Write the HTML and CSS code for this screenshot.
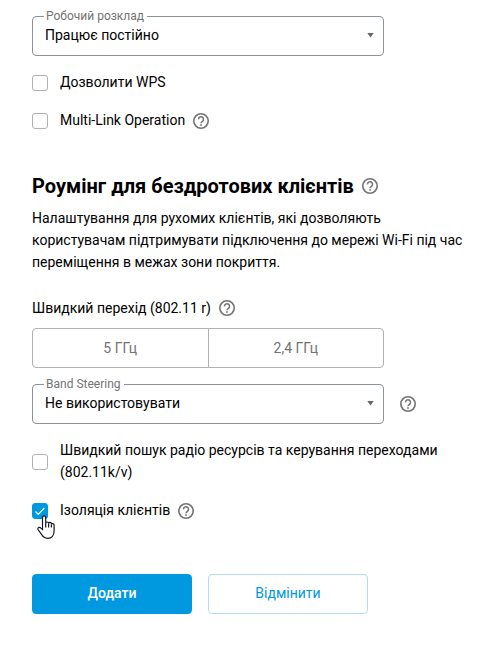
FILE: index.html
```html
<!DOCTYPE html>
<html lang="uk">
<head>
    <meta charset="UTF-8">
    <meta name="viewport" content="width=device-width, initial-scale=1.0">
    <title>Налаштування Wi-Fi</title>
    <link rel="stylesheet" href="styles.css">
</head>
<body>
    <svg class="sprite" aria-hidden="true">
        <symbol id="help" viewBox="0 0 16 16">
            <circle cx="8" cy="8" r="7.2" fill="none" stroke="currentColor" stroke-width="1.6"/>
            <path d="M5.5 6.4a2.5 2.5 0 1 1 4 1.9C8.6 9 8 9.3 8 10.3" fill="none" stroke="currentColor" stroke-width="1.5"/>
            <rect x="7.2" y="11.2" width="1.6" height="1.6" fill="currentColor"/>
        </symbol>
    </svg>

    <form class="settings">
        <div class="field">
            <label class="field-label" for="schedule">Робочий розклад</label>
            <select id="schedule" class="field-select">
                <option>Працює постійно</option>
            </select>
            <svg class="arrow" viewBox="0 0 7 5"><path d="M.3 0h6.4L3.5 4.6z"/></svg>
        </div>

        <div class="check-row">
            <input type="checkbox" id="wps" class="check">
            <label for="wps">Дозволити WPS</label>
        </div>
        <div class="check-row">
            <input type="checkbox" id="mlo" class="check">
            <label for="mlo">Multi-Link Operation</label>
            <svg class="help"><use href="#help"/></svg>
        </div>

        <div class="section-title">
            <h2>Роумінг для бездротових клієнтів</h2>
            <svg class="help"><use href="#help"/></svg>
        </div>
        <p class="section-text">Налаштування для рухомих клієнтів, які дозволяють користувачам підтримувати підключення до мережі Wi-Fi під час переміщення в межах зони покриття.</p>

        <div class="group-title">
            <span id="ft-label">Швидкий перехід (802.11 r)</span>
            <svg class="help"><use href="#help"/></svg>
        </div>
        <div class="segments" role="group" aria-labelledby="ft-label">
            <button type="button" class="segment">5 ГГц</button>
            <button type="button" class="segment">2,4 ГГц</button>
        </div>

        <div class="field-row">
            <div class="field">
                <label class="field-label" for="steering">Band Steering</label>
                <select id="steering" class="field-select">
                    <option>Не використовувати</option>
                </select>
                <svg class="arrow" viewBox="0 0 7 5"><path d="M.3 0h6.4L3.5 4.6z"/></svg>
            </div>
            <svg class="help"><use href="#help"/></svg>
        </div>

        <div class="check-row">
            <input type="checkbox" id="kv" class="check">
            <label for="kv">Швидкий пошук радіо ресурсів та керування переходами (802.11k/v)</label>
        </div>
        <div class="check-row">
            <input type="checkbox" id="isolation" class="check" checked>
            <svg class="tick" viewBox="0 0 16 16"><path d="M3.5 8.5l2.8 2.8 6-6.3"/></svg>
            <label for="isolation">Ізоляція клієнтів</label>
            <svg class="help"><use href="#help"/></svg>
            <svg class="pointer" viewBox="0 0 18 24">
                <path d="M5.5 14.5V2.6c0-1 .7-1.7 1.6-1.7s1.6.7 1.6 1.7v5.6c.2-.8.8-1.2 1.5-1.2.8 0 1.4.6 1.4 1.4.2-.6.8-1 1.4-1 .8 0 1.4.6 1.4 1.4v.5c.2-.4.7-.7 1.2-.7.8 0 1.5.6 1.5 1.5V16c0 4.3-2.4 7.3-6.4 7.3-3 0-4.9-1.5-6.2-4L1.2 14.8c-.5-.9-.3-1.8.4-2.2.7-.4 1.6-.2 2.3.5z"/>
                <path d="M8.7 8v4.5M11.6 8.5v4M14.4 9.5v3"/>
            </svg>
        </div>

        <div class="actions">
            <button type="submit" class="btn btn-primary">Додати</button>
            <button type="button" class="btn btn-outline">Відмінити</button>
        </div>
    </form>
</body>
</html>
```

FILE: styles.css
```css
* {
    box-sizing: border-box;
}
body {
    margin: 0;
    background: #fff;
    color: #000;
    font-family: Roboto, "Liberation Sans", sans-serif;
    font-size: 14px;
    line-height: 22px;
}
.sprite {
    display: none;
}
.settings {
    padding: 16px 32px 40px;
}
.field {
    position: relative;
    width: 100%;
    max-width: 352px;
}
.field-label {
    position: absolute;
    top: -8px;
    left: 12px;
    padding: 0 3px 0 2px;
    background: #fff;
    color: #737373;
    font-size: 12px;
    line-height: 16px;
}
.field-select {
    display: block;
    width: 100%;
    height: 40px;
    padding: 0 32px 2px 12px;
    border: 1px solid #8b9396;
    border-radius: 4px;
    background: #fff;
    color: #000;
    font: inherit;
    appearance: none;
}
.arrow {
    position: absolute;
    top: 17px;
    right: 10px;
    width: 7px;
    height: 5px;
    fill: #666;
}
.help {
    flex: none;
    width: 16px;
    height: 16px;
    color: #737373;
}
.check-row {
    position: relative;
    display: flex;
    align-items: center;
    margin-top: 14px;
}
.check-row label {
    padding-bottom: 2px;
}
.field + .check-row,
.field-row + .check-row {
    margin-top: 15px;
}
.check {
    flex: none;
    width: 16px;
    height: 16px;
    margin: 0 12px 0 0;
    border: 1px solid #b4b0b1;
    border-radius: 3px;
    background: #fff;
    appearance: none;
}
.check:checked {
    border-color: #0098df;
    background: #0098df;
}
.check-row .help,
.section-title .help,
.group-title .help {
    margin-left: 8px;
}
/* drawn over the checked box */
.tick {
    position: absolute;
    left: 0;
    width: 16px;
    height: 16px;
    fill: none;
    stroke: #fff;
    stroke-width: 1.2;
    pointer-events: none;
}
.pointer {
    position: absolute;
    top: 16px;
    left: 5px;
    width: 18px;
    height: 24px;
    fill: #fff;
    stroke: #15151f;
    stroke-width: 1.2;
    pointer-events: none;
}
.section-title {
    display: flex;
    align-items: center;
    margin-top: 39px;
}
.section-title h2 {
    margin: 0;
    font-size: 20px;
    font-weight: 700;
    line-height: 28px;
}
.section-text {
    margin: 7px 0 0;
}
.group-title {
    display: flex;
    align-items: center;
    margin-top: 24px;
}
.segments {
    display: flex;
    max-width: 352px;
    height: 40px;
    margin: 9px 0 16px;
    border: 1px solid #b4b0b1;
    border-radius: 4px;
}
.segment {
    flex: 1;
    padding: 0;
    border: 0;
    background: none;
    color: #737373;
    font: inherit;
}
.segment:first-child {
    border-right: 1px solid #b4b0b1;
}
.field-row {
    display: flex;
    align-items: center;
    gap: 16px;
}
.actions {
    display: flex;
    gap: 16px;
    margin-top: 51px;
}
.btn {
    width: 160px;
    height: 40px;
    padding: 0 0 2px;
    border: 1px solid #0098df;
    border-radius: 4px;
    font: inherit;
}
.btn-primary {
    background: #0098df;
    color: #fff;
    font-weight: 500;
}
.btn-outline {
    border-color: #b9d9ee;
    background: #fff;
    color: #0098df;
}
```
